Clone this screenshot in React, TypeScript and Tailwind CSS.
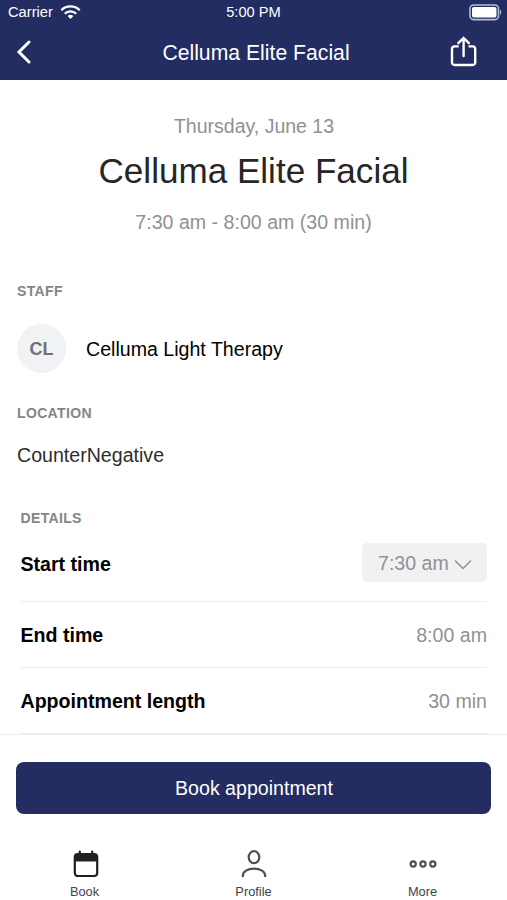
import type { ReactNode } from "react";

const details = [
  { label: "End time", value: "8:00 am" },
  { label: "Appointment length", value: "30 min" },
];

function StatusBar() {
  return (
    <div className="grid h-6 grid-cols-3 items-center pr-[5px] pl-2 text-[14.7px] leading-6">
      <div className="flex items-center gap-[7px]">
        <span>Carrier</span>
        <svg width="21" height="16" viewBox="0 0 21 16" fill="none" stroke="currentColor" strokeWidth="2.3">
          <path d="M1.3 6.2a13 13 0 0 1 18.4 0" />
          <path d="M4.8 9.7a8.1 8.1 0 0 1 11.4 0" />
          <path d="M10.5 15l-2.9-2.9a4.1 4.1 0 0 1 5.8 0z" fill="currentColor" stroke="none" />
        </svg>
      </div>
      <span className="pr-[3px] text-center">5:00 PM</span>
      <svg className="justify-self-end" width="33" height="17" viewBox="0 0 33 17" fill="none">
        <rect x="1" y="1" width="28.5" height="14.6" rx="3.6" stroke="#b9bcd6" strokeWidth="1.6" />
        <rect x="3" y="3" width="24.5" height="10.6" rx="1.8" fill="#fff" />
        <path d="M31 5.8c1.6.5 1.6 4.5 0 5z" fill="#b9bcd6" />
      </svg>
    </div>
  );
}

function Header() {
  return (
    <header className="h-20 bg-[#232d62] text-white">
      <StatusBar />
      <div className="grid h-14 grid-cols-[60px_1fr_60px] items-center">
        <button className="pl-[15px]" aria-label="Back">
          <svg width="18" height="24" viewBox="0 0 18 24" fill="none" stroke="currentColor" strokeWidth="3">
            <path d="M14 2L4 12l10 10" strokeLinecap="round" />
          </svg>
        </button>
        <h1 className="pl-[5px] text-center text-[21.2px] leading-[55px]">Celluma Elite Facial</h1>
        <button className="pl-[3px]" aria-label="Share">
          <svg width="27" height="32" viewBox="0 0 27 32" fill="none" stroke="currentColor" strokeWidth="2.4">
            <path d="M8.7 10.4H4.600A2.6 2.6 0 0 0 2 13v13.400A2.6 2.6 0 0 0 4.600 29h18a2.6 2.6 0 0 0 2.600-2.600V13a2.6 2.6 0 0 0-2.600-2.600h-4.100" />
            <path d="M13.6 20V2M8.3 7.200L13.6 1.900l5.300 5.300" strokeLinecap="round" />
          </svg>
        </button>
      </div>
    </header>
  );
}

function SectionLabel({ children }: { children: ReactNode }) {
  return (
    <h3 className="text-[14px] leading-5 font-bold tracking-[0.35px] text-[#858585] uppercase">
      {children}
    </h3>
  );
}

function Tab({ label, active, children }: { label: string; active?: boolean; children: ReactNode }) {
  return (
    <button className={active ? "flex flex-col items-center text-[#202024]" : "flex flex-col items-center text-[#505050]"}>
      <span className="flex h-8 items-center">{children}</span>
      <span className="mt-1 text-[12.8px] leading-4 text-[#444]">{label}</span>
    </button>
  );
}

export default function App() {
  return (
    <div className="flex h-[900px] w-full flex-col overflow-hidden bg-white font-['Liberation_Sans',Arial,sans-serif] text-[19.6px] leading-6 text-black">
      <Header />

      <main className="h-[654px] shrink-0">
        <section className="pt-[34px] text-center text-[#919191]">
          <p className="pl-px text-[19.5px]">Thursday, June 13</p>
          <h2 className="mt-[13px] text-[35.1px] leading-10 text-[#262626]">Celluma Elite Facial</h2>
          <p className="mt-[19px]">7:30 am - 8:00 am (30 min)</p>
        </section>

        <section className="mt-[47px] px-[17px]">
          <SectionLabel>Staff</SectionLabel>
          <div className="mt-[23px] flex items-center gap-5">
            <div className="flex size-[49px] items-center justify-center rounded-full bg-[#f0f2f4] text-[18px] font-bold text-[#6f7074]">
              CL
            </div>
            <span>Celluma Light Therapy</span>
          </div>
        </section>

        <section className="mt-[30px] px-[17px]">
          <SectionLabel>Location</SectionLabel>
          <p className="mt-5 text-[#2d2d2d]">CounterNegative</p>
        </section>

        <section className="mt-[41px] pr-5 pl-[20.5px]">
          <SectionLabel>Details</SectionLabel>
          <div className="mt-[15px] flex h-[59px] items-start justify-between border-b border-[#ededed]">
            <span className="pt-[9px] font-bold">Start time</span>
            <button className="flex h-[39px] w-[125px] items-center rounded-[5px] bg-[#f0f1f3] pl-4 text-[#919191]">
              7:30 am
              <svg className="mt-[3px] ml-[5px]" width="18" height="11" viewBox="0 0 18 11" fill="none" stroke="currentColor" strokeWidth="1.5">
                <path d="M1 1.500l8 8 8-8" />
              </svg>
            </button>
          </div>
          {details.map((row) => (
            <div key={row.label} className="flex h-[66px] items-center justify-between border-b border-[#ededed]">
              <span className="font-bold">{row.label}</span>
              <span className="text-[#919191]">{row.value}</span>
            </div>
          ))}
        </section>
      </main>

      <footer className="grow border-t border-[#ededed] px-4 pt-[27px]">
        <button className="h-[52px] w-full rounded-lg bg-[#232d62] pl-px text-[19.6px] text-white">
          Book appointment
        </button>
        <nav className="-mx-4 mt-[34px] grid grid-cols-3">
          <Tab label="Book" active>
            <svg className="ml-[3px]" width="26" height="28" viewBox="0 0 26 28" fill="none">
              <path d="M6.8 1.500v5M19.200 1.500v5" stroke="currentColor" strokeWidth="2.2" strokeLinecap="round" />
              <rect x="1.8" y="4" width="22.4" height="22" rx="3" stroke="currentColor" strokeWidth="2.2" />
              <path d="M2 6a2 2 0 0 1 2-2h18a2 2 0 0 1 2 2v5.500H2z" fill="currentColor" />
            </svg>
          </Tab>
          <Tab label="Profile">
            <svg width="26" height="28" viewBox="0 0 26 28" fill="none" stroke="currentColor" strokeWidth="2.2">
              <ellipse cx="13" cy="7.2" rx="5.3" ry="6" />
              <path d="M1.800 27v-1c0-4.500 4.700-7.300 11.200-7.300s11.200 2.800 11.200 7.300v1" />
            </svg>
          </Tab>
          <Tab label="More">
            <svg width="28" height="10" viewBox="0 0 28 10" fill="none" stroke="currentColor" strokeWidth="2.2">
              <circle cx="4.2" cy="5" r="2.6" />
              <circle cx="14" cy="5" r="2.6" />
              <circle cx="23.8" cy="5" r="2.6" />
            </svg>
          </Tab>
        </nav>
      </footer>
    </div>
  );
}
